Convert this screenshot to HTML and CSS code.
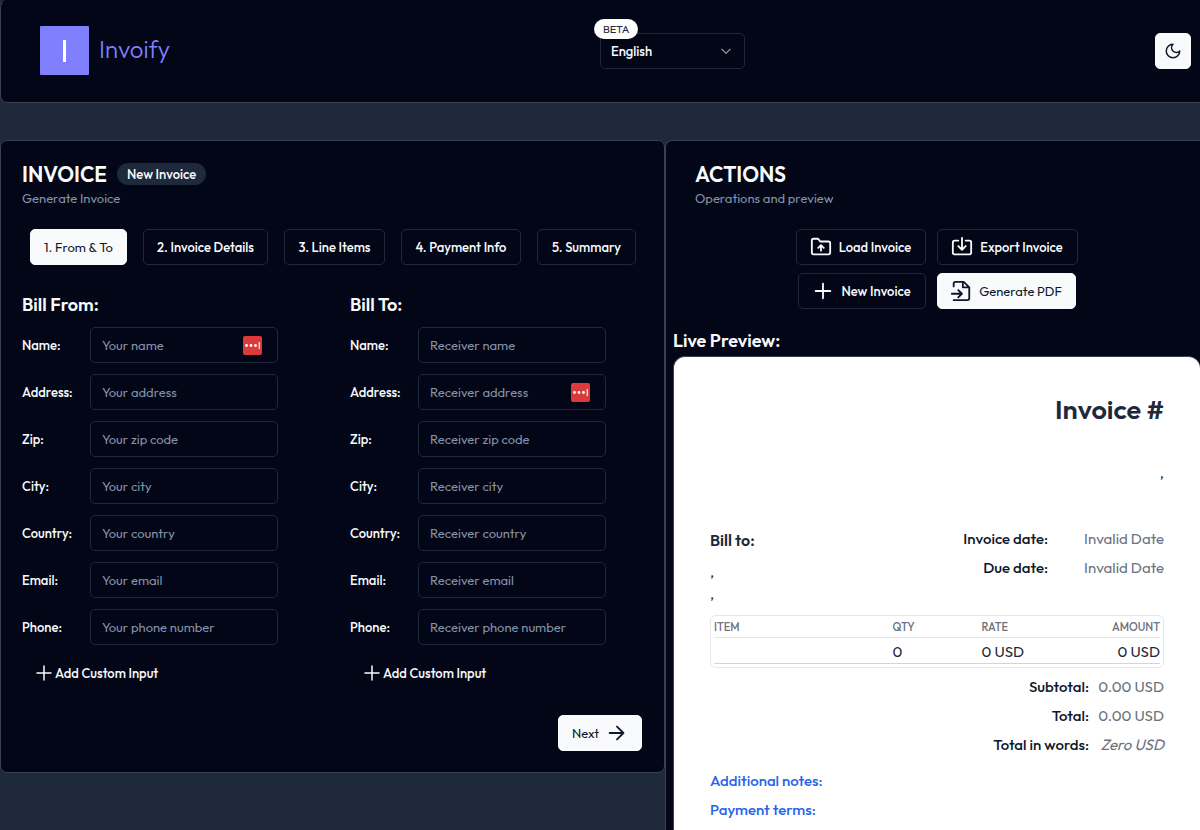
FILE: index.html
```html
<!DOCTYPE html>
<html lang="en">
<head>
<meta charset="utf-8">
<title>Invoify</title>
<link rel="stylesheet" href="styles.css">
</head>
<body>
<header class="navbar">
  <a class="brand" href="#"><span class="brand-mark"><span class="brand-bar"></span></span><span class="brand-name">Invoify</span></a>
  <div class="language">
    <span class="beta">BETA</span>
    <select class="select" aria-label="Language"><option>English</option></select>
    <svg class="chevron" viewBox="0 0 24 24"><path d="m5 9 7 7 7-7"/></svg>
  </div>
  <button class="btn btn-light theme" aria-label="Toggle theme"><svg class="icon-sm" viewBox="0 0 24 24"><path d="M12 3a6 6 0 0 0 9 9 9 9 0 1 1-9-9Z"/></svg></button>
</header>
<main class="columns">
  <form class="card form-card">
    <div class="title-row"><h1 class="title">INVOICE</h1><span class="badge">New Invoice</span></div>
    <p class="subtitle">Generate Invoice</p>
    <nav class="tabs">
      <button type="button" class="btn btn-light tab-from">1. From &amp; To</button>
      <button type="button" class="btn tab-details">2. Invoice Details</button>
      <button type="button" class="btn tab-items">3. Line Items</button>
      <button type="button" class="btn tab-payment">4. Payment Info</button>
      <button type="button" class="btn tab-summary">5. Summary</button>
    </nav>
    <div class="parties">
      <section class="party">
        <h2 class="heading">Bill From:</h2>
        <div class="field"><label for="fn">Name:</label><div class="control"><input id="fn" placeholder="Your name"><svg class="manager" viewBox="0 0 19 19"><rect width="19" height="19" rx="2" fill="#dc3a38"/><circle cx="3.5" cy="9.5" r="1.4"/><circle cx="8" cy="9.5" r="1.4"/><circle cx="12.5" cy="9.5" r="1.4"/><path d="M15.7 6h1.1v7h-1.1z"/></svg></div></div>
        <div class="field"><label for="fa">Address:</label><div class="control"><input id="fa" placeholder="Your address"></div></div>
        <div class="field"><label for="fz">Zip:</label><div class="control"><input id="fz" placeholder="Your zip code"></div></div>
        <div class="field"><label for="fc">City:</label><div class="control"><input id="fc" placeholder="Your city"></div></div>
        <div class="field"><label for="fo">Country:</label><div class="control"><input id="fo" placeholder="Your country"></div></div>
        <div class="field"><label for="fe">Email:</label><div class="control"><input id="fe" placeholder="Your email"></div></div>
        <div class="field"><label for="fp">Phone:</label><div class="control"><input id="fp" placeholder="Your phone number"></div></div>
        <button type="button" class="add"><svg class="icon-add" viewBox="0 0 16 16"><path d="M8 1v14M1 8h14"/></svg>Add Custom Input</button>
      </section>
      <section class="party">
        <h2 class="heading">Bill To:</h2>
        <div class="field"><label for="tn">Name:</label><div class="control"><input id="tn" placeholder="Receiver name"></div></div>
        <div class="field"><label for="ta">Address:</label><div class="control"><input id="ta" placeholder="Receiver address"><svg class="manager" viewBox="0 0 19 19"><rect width="19" height="19" rx="2" fill="#dc3a38"/><circle cx="3.5" cy="9.5" r="1.4"/><circle cx="8" cy="9.5" r="1.4"/><circle cx="12.5" cy="9.5" r="1.4"/><path d="M15.7 6h1.1v7h-1.1z"/></svg></div></div>
        <div class="field"><label for="tz">Zip:</label><div class="control"><input id="tz" placeholder="Receiver zip code"></div></div>
        <div class="field"><label for="tc">City:</label><div class="control"><input id="tc" placeholder="Receiver city"></div></div>
        <div class="field"><label for="to">Country:</label><div class="control"><input id="to" placeholder="Receiver country"></div></div>
        <div class="field"><label for="te">Email:</label><div class="control"><input id="te" placeholder="Receiver email"></div></div>
        <div class="field"><label for="tp">Phone:</label><div class="control"><input id="tp" placeholder="Receiver phone number"></div></div>
        <button type="button" class="add"><svg class="icon-add" viewBox="0 0 16 16"><path d="M8 1v14M1 8h14"/></svg>Add Custom Input</button>
      </section>
    </div>
    <div class="form-footer"><button type="button" class="btn btn-light next">Next<svg class="icon" viewBox="0 0 24 24"><path d="M4 12h15M12 5l7 7-7 7"/></svg></button></div>
  </form>
  <section class="card actions-card">
    <div class="actions-head">
      <div class="title-row"><h1 class="title">ACTIONS</h1></div>
      <p class="subtitle">Operations and preview</p>
    </div>
    <div class="actions">
      <div class="action-row">
        <button class="btn load"><svg class="icon" viewBox="0 0 24 24"><path d="M20 20a2 2 0 0 0 2-2V8a2 2 0 0 0-2-2h-7.9a2 2 0 0 1-1.7-.9L9.6 3.9A2 2 0 0 0 7.9 3H4a2 2 0 0 0-2 2v13a2 2 0 0 0 2 2ZM12 10v6M9 13l3-3 3 3"/></svg>Load Invoice</button>
        <button class="btn export"><svg class="icon" viewBox="0 0 24 24"><path d="M12 2v13M8 11l4 4 4-4M8 5H4a2 2 0 0 0-2 2v11a2 2 0 0 0 2 2h16a2 2 0 0 0 2-2V7a2 2 0 0 0-2-2h-4"/></svg>Export Invoice</button>
      </div>
      <div class="action-row">
        <button class="btn new"><svg class="icon" viewBox="0 0 24 24"><path d="M12 4v16M4 12h16"/></svg>New Invoice</button>
        <button class="btn btn-light pdf"><svg class="icon" viewBox="0 0 24 24"><path d="M4 7V4a2 2 0 0 1 2-2h9l6 6v12a2 2 0 0 1-2 2H4M14 2v6h6M2 15h11M9 11l4 4-4 4"/></svg>Generate PDF</button>
      </div>
    </div>
    <h2 class="heading preview-heading">Live Preview:</h2>
    <article class="preview">
      <h2 class="invoice-number">Invoice #</h2>
      <address class="sender">,</address>
      <div class="details">
        <div class="receiver"><h3>Bill to:</h3><address>,<br>,</address></div>
        <dl class="pairs dates"><dt>Invoice date:</dt><dd>Invalid Date</dd><dt>Due date:</dt><dd>Invalid Date</dd></dl>
      </div>
      <div class="items-box">
        <table class="items">
          <thead><tr><th class="col-item">ITEM</th><th class="col-qty">QTY</th><th class="col-rate">RATE</th><th class="col-amount">AMOUNT</th></tr></thead>
          <tbody><tr><td></td><td>0</td><td>0 USD</td><td class="col-amount">0 USD</td></tr></tbody>
        </table>
      </div>
      <dl class="pairs totals"><dt>Subtotal:</dt><dd>0.00 USD</dd><dt>Total:</dt><dd>0.00 USD</dd><dt>Total in words:</dt><dd><em>Zero USD</em></dd></dl>
      <p class="note">Additional notes:</p>
      <p class="note">Payment terms:</p>
    </article>
  </section>
</main>
</body>
</html>
```
FILE: styles.css
```css
* { box-sizing: border-box; }
body {
  margin: 0;
  min-height: 100vh;
  overflow: hidden;
  background: #1e293b;
  color: #f8fafc;
  font-family: Outfit, Lato, "Open Sans", sans-serif;
  font-size: 13px;
  line-height: 18px;
}
h1, h2, h3, p, dl, dd { margin: 0; }
address { font-style: normal; }
button, input, select { font: inherit; color: inherit; }
svg { flex: none; fill: none; stroke: currentColor; stroke-width: 2; stroke-linecap: round; stroke-linejoin: round; }
.icon { width: 22px; height: 22px; }
.icon-sm { width: 18px; height: 18px; }
.icon-add { width: 16px; height: 16px; stroke-width: 1.5; }

.navbar {
  display: grid;
  grid-template-columns: 560px 145px 1fr;
  align-items: center;
  height: 103px;
  padding: 0 9px 2px 39px;
  border: 1px solid #374151;
  border-right: 0;
  border-top-color: #020617;
  border-radius: 7px 0 0 7px;
  background: #020617;
}
.brand { display: flex; align-items: center; gap: 10px; color: #8080ff; font-size: 24px; font-weight: 300; line-height: 30px; text-decoration: none; }
.brand-name { padding-bottom: 4px; }
.brand-mark { display: flex; align-items: center; justify-content: center; width: 49px; height: 49px; border-radius: 1px; background: #8080ff; }
.brand-bar { width: 3px; height: 22px; background: #fff; }
.language { position: relative; }
.select { display: block; appearance: none; width: 100%; height: 36px; padding: 0 10px; border: 1px solid #1e293b; border-radius: 5px; background: #020617; font-weight: 500; }
.chevron { position: absolute; right: 12px; top: 11px; width: 14px; height: 14px; opacity: .6; }
.beta { position: absolute; z-index: 1; left: -6px; top: -14px; padding: 1px 9px; border-radius: 10px; background: #fff; color: #1e293b; font-size: 11px; }

.btn { display: inline-flex; align-items: center; justify-content: center; gap: 7px; height: 36px; padding: 0; border: 1px solid #1e293b; border-radius: 5px; background: #020617; font-weight: 500; white-space: nowrap; }
.btn-light { border-color: #f8fafc; background: #f8fafc; color: #0f172a; font-weight: 400; }
.theme { width: 36px; justify-self: end; }

.columns { display: flex; align-items: flex-start; margin-top: 37px; }
.card { border: 1px solid #374151; border-radius: 7px; background: #020617; }
.form-card { flex: 0 0 665px; padding: 21px 22px; padding-left: 21px; }
.title-row { display: flex; align-items: center; gap: 10px; height: 24px; }
.title { font-size: 21px; line-height: 24px; font-weight: 600; }
.badge { padding: 2px 10px; border-radius: 11px; background: #1e293b; font-weight: 500; }
.subtitle { margin-top: 3px; color: #8492a8; }
.tabs { display: flex; gap: 16px; margin: 22px 0 0 8px; }
.tab-from { width: 97px; }
.tab-details { width: 125px; }
.tab-items { width: 101px; }
.tab-payment { width: 120px; }
.tab-summary { width: 99px; }

.parties { display: flex; gap: 72px; margin-top: 28px; }
.heading { font-size: 18px; line-height: 24px; font-weight: 600; }
.party { display: flex; flex-direction: column; gap: 11px; width: 256px; }
.party .heading { margin-bottom: -1px; }
.field { display: flex; align-items: center; justify-content: space-between; font-weight: 500; }
.control { position: relative; width: 188px; }
.control input { display: block; width: 100%; height: 36px; padding: 0 11px; border: 1px solid #1e293b; border-radius: 5px; background: #020617; font-weight: 400; }
.control input::placeholder { color: #8492a8; opacity: 1; }
.manager { position: absolute; right: 16px; top: 9px; width: 19px; height: 19px; fill: #fff; stroke: none; }
.add { display: flex; align-items: center; gap: 3px; height: 34px; padding: 0 14px; border: 0; background: none; font-weight: 500; }
.form-footer { display: flex; justify-content: flex-end; margin-top: 25px; }
.next { width: 84px; }

.actions-card { flex: 1; min-width: 0; padding: 21px 0 0 7px; border-right: 0; border-radius: 7px 0 0 0; }
.actions-head { padding-left: 22px; }
.actions { display: flex; flex-direction: column; gap: 8px; margin-top: 22px; }
.action-row { display: flex; justify-content: center; gap: 11px; }
.load { width: 130px; }
.export { width: 141px; }
.new { width: 128px; }
.pdf { width: 139px; }
.preview-heading { margin-top: 20px; }
.preview { margin-top: 3px; min-height: 500px; padding: 35px 36px 0 36px; border: 1px solid #374151; border-right: 0; border-radius: 12px 12px 0 0; background: #fff; color: #1e293b; font-size: 15px; line-height: 22px; }
.invoice-number { font-size: 27px; line-height: 34px; font-weight: 600; text-align: right; }
.sender { margin-top: 36px; text-align: right; }
.details { display: flex; justify-content: space-between; margin-top: 44px; }
.receiver h3 { font-size: 16px; line-height: 24px; font-weight: 600; }
.receiver address { margin-top: 9px; line-height: 22px; }
.pairs { display: grid; justify-content: end; row-gap: 7px; text-align: right; }
.pairs dt { font-weight: 500; color: #0f172a; }
.pairs dd { color: #6b7280; }
.dates { grid-template-columns: auto 116px; align-content: start; }
.items-box { margin-top: 10px; padding: 2px 3px 3px; border: 1px solid #e5e7eb; border-radius: 6px; }
.items { width: 100%; border-collapse: collapse; table-layout: fixed; }
.items th { height: 19px; padding: 0; border-bottom: 1px solid #e5e7eb; color: #6b7280; font-size: 11px; line-height: 16px; font-weight: 500; text-align: left; }
.items td { height: 26px; padding: 4px 0 0; border-bottom: 1px solid #d1d5db; line-height: 20px; }
.items .col-item { width: 40%; }
.items .col-qty { width: 20%; }
.items .col-rate { width: 20%; }
.items .col-amount { width: 20%; text-align: right; }
.totals { grid-template-columns: auto 75px; margin-top: 8px; }
.note { margin-top: 7px; color: #2563eb; font-weight: 500; }
.totals + .note { margin-top: 14px; }
```
